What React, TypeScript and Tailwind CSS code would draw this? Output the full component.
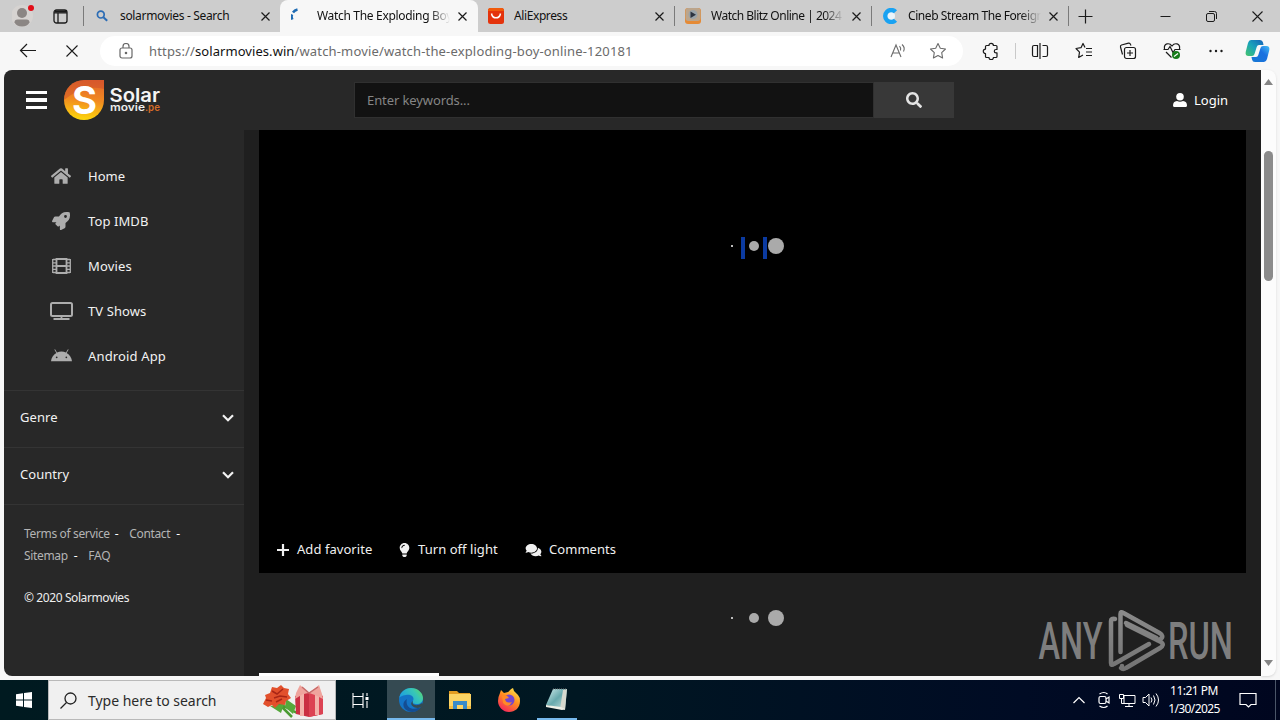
import React from "react";
import { FaHome, FaRocket, FaSearch, FaLightbulb, FaComments } from "react-icons/fa";
import { FaAndroid } from "react-icons/fa6";

const Sep = () => <div className="h-5 w-px shrink-0 bg-[#7a7a7a]" />;

const CloseGlyph = () => (
  <svg className="size-[11px] shrink-0" viewBox="0 0 11 11" fill="none" stroke="#1b1b1b" strokeWidth="1.2">
    <path d="M1.5 1.5 9.5 9.5M9.5 1.5 1.5 9.5" />
  </svg>
);

const SearchFav = () => (
  <svg className="size-4" viewBox="0 0 16 16" fill="none" stroke="#2b6cb5">
    <circle cx="6.8" cy="6.6" r="3.4" strokeWidth="1.7" />
    <path d="m9.4 9.2 3.8 3.6" strokeWidth="2" />
  </svg>
);

const SpinFav = () => (
  <svg className="size-4" viewBox="0 0 16 16" fill="none" stroke="#1d6bb3" strokeWidth="2.4">
    <path d="M1.500 11.500Q0 9 1.200 6.500" />
    <path d="M2 4.500Q3.500 2.200 6.500 1.500" />
  </svg>
);

const AliFav = () => (
  <svg className="size-4" viewBox="0 0 16 16">
    <rect width="16" height="16" rx="2.500" fill="#e4330c" />
    <path d="M0 3V2.500A2.500 2.500 0 0 1 2.500 0h11A2.500 2.500 0 0 1 16 2.500V3z" fill="#f05a0b" />
    <path d="M3.500 5.500C4.500 11.300 11.500 11.300 12.500 5.500" fill="none" stroke="#fff" strokeWidth="1.500" />
  </svg>
);

const BlitzFav = () => (
  <svg className="size-4" viewBox="0 0 16 16">
    <rect width="16" height="16" rx="3" fill="#e58a35" />
    <rect x="0.500" width="15" height="13" rx="3" fill="#bba58c" />
    <circle cx="8" cy="6.500" r="4.500" fill="#9aa3a8" />
    <path d="M5.500 3.500v6.500l5.500-3.200z" fill="#2d3440" />
  </svg>
);

const CinebFav = () => (
  <svg className="size-4" viewBox="0 0 16 16" fill="none">
    <circle cx="9" cy="8" r="4" fill="#eaf4fb" />
    <path d="M13.500 3.800A6 6 0 1 0 13.500 12.200" stroke="#19a2f2" strokeWidth="4.400" />
  </svg>
);

function Tab({ icon, title, active, width }: { icon: React.ReactNode; title: string; active?: boolean; width: string }) {
  return (
    <div className={`flex h-8 w-[196px] shrink-0 items-center ${active ? "-ml-px w-[198px] rounded-t-lg bg-[#f7f7f7] pl-[11px]" : "pl-[10px]"}`}>
      {icon}
      <div className={`ml-[10px] w-[133px] shrink-0 overflow-hidden whitespace-nowrap text-[12px] leading-4 text-[#111] ${width}`}>{title}</div>
      <div className="ml-[7px]"><CloseGlyph /></div>
    </div>
  );
}

const fade = "[mask-image:linear-gradient(to_right,#000_85%,transparent)]";

function TabBar() {
  return (
    <div className="flex h-8 shrink-0 items-center bg-[#cdcdcd]">
      <svg className="ml-3 h-6 w-6 shrink-0" viewBox="0 0 24 24">
        <circle cx="10" cy="12" r="11" fill="#d6d3d1" />
        <circle cx="10" cy="9" r="5" fill="#8b8684" />
        <path d="M2.500 18.500q0-3 3-3h9q3 0 3 3q-2 4-7.500 4t-7.500-4z" fill="#8b8684" />
        <circle cx="19" cy="4" r="3" fill="#e20d18" />
      </svg>
      <svg className="ml-[17px] h-[15px] w-[15px] shrink-0" viewBox="0 0 15 15" fill="none" stroke="#1b1b1b" strokeWidth="1.300">
        <rect x="1" y="1" width="13" height="13" rx="2.500" />
        <path d="M1 3.800h13M5 4v10" /><path d="M2 2.500h11" strokeWidth="2" />
      </svg>
      <div className="ml-[15px]"><Sep /></div>
      <Tab icon={<SearchFav />} title="solarmovies - Search" width="tracking-[-0.33px]" />
      <div className="w-px" />
      <Tab icon={<SpinFav />} title="Watch The Exploding Boy" active width={`tracking-[-0.32px] ${fade}`} />
      <Tab icon={<AliFav />} title="AliExpress" width="tracking-[-0.4px]" />
      <Sep />
      <Tab icon={<BlitzFav />} title="Watch Blitz Online | 2024" width={`tracking-[-0.5px] ${fade}`} />
      <Sep />
      <Tab icon={<CinebFav />} title="Cineb Stream The Foreign" width={`tracking-[-0.42px] ${fade}`} />
      <Sep />
      <svg className="ml-[9px] size-[15px] shrink-0" viewBox="0 0 15 15" stroke="#1b1b1b" strokeWidth="1.200"><path d="M7.500 0.500v14M.5 7.500h14" /></svg>
      <svg className="ml-[67px] h-3 w-[11px] shrink-0" viewBox="0 0 11 12" stroke="#1b1b1b"><path d="M0.500 6.500h10" /></svg>
      <svg className="ml-[35px] size-[11px] shrink-0" viewBox="0 0 11 11" fill="none" stroke="#1b1b1b"><rect x="0.500" y="2.500" width="8" height="8" rx="1.500" /><path d="M3 .5h5.500a2 2 0 0 1 2 2V8" /></svg>
      <svg className="ml-[35px] size-[11px] shrink-0" viewBox="0 0 11 11" stroke="#1b1b1b" strokeWidth="1.100"><path d="m.5.5 10 10m0-10-10 10" /></svg>
    </div>
  );
}

const tb = "size-[18px] shrink-0";

function Toolbar() {
  return (
    <div className="flex h-[38px] shrink-0 items-center bg-[#f7f7f7]">
      <svg className="ml-[19px] h-4 w-[17px] shrink-0" viewBox="0 0 17 16" fill="none" stroke="#1b1b1b" strokeWidth="1.200"><path d="M17 7.500H1.500M8 1 1.500 7.500 8 14" /></svg>
      <svg className="ml-[30px] size-3 shrink-0" viewBox="0 0 12 12" stroke="#1b1b1b" strokeWidth="1.100"><path d="m.5.5 11 11m0-11-11 11" /></svg>
      <div className="ml-[22px] flex h-[30px] w-[863px] shrink-0 items-center rounded-full bg-white">
        <svg className="ml-[19px] h-4 w-[14px] shrink-0" viewBox="0 0 14 16" fill="none" stroke="#686868" strokeWidth="1.200"><rect x="1" y="5" width="12" height="10" rx="2" /><path d="M4 5V3.500a3 3 0 0 1 6 0V5" /><circle cx="7" cy="10" r=".7" fill="#555" /></svg>
        <div className="ml-4 w-[740px] whitespace-nowrap text-[13px] leading-5 tracking-[0.16px] text-[#6b6b6b]">https://<span className="tracking-[0.06px] text-[#111]">solarmovies.win</span>/watch-movie/watch-the-exploding-boy-online-120181</div>
        <svg className="ml-[1px] h-4 w-[18px] shrink-0" viewBox="0 0 18 16" fill="none" stroke="#6b6b6b" strokeWidth="1.100"><path d="M1 14 6 2l5 12M2.800 10h6.500M9.500 3.200q1.800 1.800 1 4.300M12 1.500Q15.500 4.500 13.500 8.500" /></svg>
        <svg className="ml-[21px] size-[18px] shrink-0" viewBox="0 0 18 18" fill="none" stroke="#6b6b6b" strokeWidth="1.100" strokeLinejoin="round"><path d="m9 1.500 2.300 4.800 5.200.7-3.800 3.700.9 5.300L9 13.500 4.400 16l.9-5.300L1.500 7l5.200-.7z" /></svg>
      </div>
      <svg className={`ml-[19px] ${tb}`} viewBox="0 0 18 18" fill="none" stroke="#1b1b1b" strokeWidth="1.200" strokeLinejoin="round"><path d="M4.500 3.500H7a2.200 2.200 0 0 1 4.400 0H14q1 0 1 1V7.500h-1a1.700 1.700 0 0 0 0 3.400h1V14.500q0 1-1 1h-2.600a2.200 2.200 0 0 1-4.400 0H4.500q-1 0-1-1V11.500a2.200 2.200 0 0 1 0-4.400V4.500q0-1 1-1z" /></svg>
      <div className="ml-[15px] h-4 w-px bg-[#c9c9c9]" />
      <svg className={`ml-[15px] ${tb}`} viewBox="0 0 18 18" fill="none" stroke="#1b1b1b" strokeWidth="1.200"><path d="M6.500 3.500H3a1.500 1.500 0 0 0-1.500 1.500v8A1.500 1.500 0 0 0 3 14.500h3.500zM11.500 3.500H15A1.500 1.500 0 0 1 16.500 5v8a1.500 1.500 0 0 1-1.500 1.500h-3.500M9 1v16" /></svg>
      <svg className={`ml-[26px] ${tb}`} viewBox="0 0 18 18" fill="none" stroke="#1b1b1b" strokeWidth="1.200" strokeLinejoin="round"><path d="m10 5.500 -2-4-2 4.200L1 6.500l3.500 3.700-.8 5.300L8 13M11 6.500h6M11 10h6M11 13.500h6" /></svg>
      <svg className={`ml-[26px] ${tb}`} viewBox="0 0 18 18" fill="none" stroke="#1b1b1b" strokeWidth="1.200"><rect x="5.500" y="5.500" width="11" height="11" rx="2" /><path d="M11 8v6M8 11h6M3.500 12.500 1.500 5q-.4-1.500 1-2L9.500 1.200q1.500-.3 2 1.200l.5 1" /></svg>
      <svg className={`ml-[26px] ${tb}`} viewBox="0 0 18 18" fill="none" stroke="#1b1b1b" strokeWidth="1.200"><path d="M1.500 7C.5 1 6.500.5 9 4c2.500-3.500 8.500-3 7.500 3M.5 7.500H5l2-3 3 6 2-3h5.500M3 10l5.500 5.500" /><circle cx="13" cy="13" r="4" fill="#167c19" stroke="none" /><path d="m11 14.500 4-3" stroke="#fff" /></svg>
      <svg className={`ml-[26px] ${tb}`} viewBox="0 0 18 18" fill="#1b1b1b"><circle cx="3.500" cy="9" r="1.200" /><circle cx="9" cy="9" r="1.200" /><circle cx="14.500" cy="9" r="1.200" /></svg>
      <svg className="ml-[20px] h-6 w-[25px] shrink-0" viewBox="0 0 25 24">
        <defs>
          <linearGradient id="ca" x1="0" y1="1" x2="1" y2="0"><stop stopColor="#46c46b" /><stop offset=".5" stopColor="#18a3ba" /><stop offset="1" stopColor="#1660b8" /></linearGradient>
          <linearGradient id="cb" x1="0" y1="1" x2="1" y2="0"><stop stopColor="#1678d3" /><stop offset=".6" stopColor="#1b70e0" /><stop offset="1" stopColor="#45c0f5" /></linearGradient>
        </defs>
        <path d="M6 1h9q2.500 0 3 2.500L18.500 6H14q-1.800 0-2.300 2L9.500 15q-.5 2-2.500 2H3.500Q0 17 .7 13L3 4q.8-3 3-3z" fill="url(#ca)" />
        <path d="M19 23h-9q-2.500 0-3-2.500L6.500 18H11q1.800 0 2.300-2l2.200-7q.5-2 2.500-2h3.500Q25 7 24.300 11L22 20q-.8 3-3 3z" fill="url(#cb)" />
      </svg>
    </div>
  );
}

const SolarLogo = () => (
  <svg className="ml-[17px] h-10 w-[98px] shrink-0" viewBox="0 0 98 40">
    <defs><linearGradient id="sg" x1="0.600" y1="0" x2="0.500" y2="1"><stop stopColor="#e2652a" /><stop offset=".5" stopColor="#f18a20" /><stop offset="1" stopColor="#fdd70c" /></linearGradient></defs>
    <path d="M20 0h20v20A20 20 0 1 1 20 0z" fill="url(#sg)" />
    <path d="M0 20A20 20 0 0 1 20 0h20v9Q20 4 0 20z" fill="#c94a2d" opacity=".45" />
    <text x="8" y="34" fontFamily="Inter, sans-serif" fontWeight="700" fontSize="38" fill="#fff" textLength="25" lengthAdjust="spacingAndGlyphs">S</text>
    <text x="45.500" y="22" fontFamily="Inter, sans-serif" fontWeight="600" fontSize="18.500" fill="#f4f4f4" textLength="50.500" lengthAdjust="spacingAndGlyphs">Solar</text>
    <text x="46" y="31" fontFamily="Inter, sans-serif" fontWeight="600" fontSize="10.500" fill="#ececec" textLength="35" lengthAdjust="spacingAndGlyphs">movie</text>
    <text x="81" y="31" fontFamily="Inter, sans-serif" fontWeight="600" fontSize="10.500" fill="#d56b28" textLength="15" lengthAdjust="spacingAndGlyphs">.pe</text>
  </svg>
);

function SiteHeader() {
  return (
    <header className="flex h-[60px] shrink-0 items-center bg-[#282828] text-white">
      <div className="ml-[22px] flex w-[21px] flex-col gap-[4px]">
        <div className="h-[3px] bg-white" /><div className="h-[4px] bg-white" /><div className="h-[3px] bg-white" />
      </div>
      <SolarLogo />
      <div className="ml-[192px] flex h-9 w-[600px] shrink-0">
        <div className="flex w-[520px] items-center border border-[#303030] bg-[#121212] pt-[2px] pl-[12px] text-[13px] tracking-[-0.1px] text-[#858585]">Enter keywords...</div>
        <div className="flex w-20 items-center justify-center bg-[#383838] text-[#e4e4e4]"><FaSearch className="size-4" /></div>
      </div>
      <div className="ml-[219px] flex items-center gap-[7px] text-[13px]">
        <svg className="h-[14px] w-[14px]" viewBox="0 0 14 14" fill="#fff"><circle cx="7" cy="3.800" r="3.800" /><path d="M0 12.500Q0 8.300 4 8q3 1.500 6 0 4 .3 4 4.500 0 1.500-1.500 1.500h-11Q0 14 0 12.500z" /></svg>
        <span className="pt-[2px]">Login</span>
      </div>
    </header>
  );
}

const FilmIcon = () => (
  <svg className="h-4 w-[19px]" viewBox="0 0 19 16" fill="none" stroke="currentColor">
    <path d="M4.500 1h10v14h-10zM4.500 8h10" strokeWidth="1.800" />
    <path d="M.7 1v14M18.300 1v14M1 1.500h3M1 4.800h3M1 8h3M1 11.300h3M1 14.500h3M15 1.500h3M15 4.800h3M15 8h3M15 11.300h3M15 14.500h3" strokeWidth="1.300" />
  </svg>
);

const TvIcon = () => (
  <svg className="h-[18px] w-[23px]" viewBox="0 0 23 18" fill="none" stroke="currentColor">
    <rect x="1" y="1" width="21" height="13" rx="1.500" strokeWidth="2" />
    <path d="M3.500 17h16M11.500 14v3" strokeWidth="1.800" />
  </svg>
);

const nav = [
  { label: "Home", icon: <FaHome className="size-5" />, t: "tracking-[0px]" },
  { label: "Top IMDB", icon: <FaRocket className="size-[18px]" />, t: "tracking-[0.1px]" },
  { label: "Movies", icon: <FilmIcon />, t: "tracking-[0.15px]" },
  { label: "TV Shows", icon: <TvIcon />, t: "tracking-[0.1px]" },
  { label: "Android App", icon: <FaAndroid className="size-[21px]" />, t: "tracking-[0.15px]" },
];

const Chevron = () => (
  <svg className="h-2 w-3" viewBox="0 0 12 8" fill="none" stroke="#f2f2f2" strokeWidth="2.200"><path d="m1 1.200 5 5 5-5" /></svg>
);

function Sidebar() {
  return (
    <aside className="flex w-60 shrink-0 flex-col bg-[#282828] text-[13px] text-[#f2f2f2]">
      <nav className="flex h-[260px] flex-col pt-6">
        {nav.map((n) => (
          <div key={n.label} className="flex h-[45px] items-center pl-[45px]">
            <div className="flex w-6 shrink-0 justify-center pb-px text-[#adadad]">{n.icon}</div>
            <span className={`ml-[15px] ${n.t}`}>{n.label}</span>
          </div>
        ))}
      </nav>
      {["Genre", "Country"].map((s) => (
        <div key={s} className="flex h-[57px] items-center justify-between border-t border-[#343434] pr-[10px] pb-[2px] pl-4">
          <span className="tracking-[0.05px]">{s}</span><Chevron />
        </div>
      ))}
      <div className="border-t border-[#343434] pt-[18px] pl-5 text-[12px] leading-[22px] tracking-[-0.35px] text-[#b4b4b4]">
        <div className="flex"><span>Terms of service</span><span className="ml-[5px] text-white">-</span><span className="ml-[11px]">Contact</span><span className="ml-[6px] text-white">-</span></div>
        <div className="flex"><span>Sitemap</span><span className="ml-[6px] text-white">-</span><span className="ml-[11px] tracking-[-0.2px]">FAQ</span></div>
        <div className="mt-5 tracking-[-0.4px] text-[#eee]">© 2020 Solarmovies</div>
      </div>
    </aside>
  );
}

function Loading({ bars }: { bars?: boolean }) {
  return (
    <div className="flex h-[22px] items-center">
      <div className="size-[2px] bg-[#bbb]" />
      <div className={`ml-[8px] h-[22px] w-1 self-start ${bars ? "translate-y-[2px] bg-[#0b3aa0]" : ""}`} />
      <div className="ml-1 size-[10px] rounded-full bg-[#aaa]" />
      <div className={`ml-1 h-[22px] w-1 self-start ${bars ? "translate-y-[2px] bg-[#0b3aa0]" : ""}`} />
      <div className="ml-px size-4 rounded-full bg-[#aaa]" />
    </div>
  );
}

function Main() {
  return (
    <main className="flex w-[1017px] flex-col bg-[#1f1f1f] pl-[15px]">
      <section className="flex h-[443px] w-[987px] shrink-0 flex-col bg-black pt-[105px] text-[#f0f0f0]">
        <div className="pl-[472px]"><Loading bars /></div>
        <div className="mt-auto mb-[13px] flex h-5 items-center pl-[18px] text-[13px]">
          <svg className="size-3" viewBox="0 0 12 12" stroke="#f0f0f0" strokeWidth="2.200"><path d="M6 0v12M0 6h12" /></svg>
          <span className="ml-2 w-[76px] whitespace-nowrap tracking-[0.05px]">Add favorite</span>
          <FaLightbulb className="ml-[23px] h-[14px] w-[17px]" /><span className="ml-[5px] w-[80px] whitespace-nowrap tracking-[0.05px]">Turn off light</span>
          <FaComments className="ml-[27px] h-[14px] w-[17px]" /><span className="ml-[7px] tracking-[0.05px]">Comments</span>
        </div>
      </section>
      <div className="mt-[34px] pl-[472px]"><Loading /></div>
      <div className="mt-auto h-[3px] w-[180px] shrink-0 bg-white" />
    </main>
  );
}

const Watermark = () => (
  <svg className="absolute top-[538px] left-[1034px] h-[66px] w-[200px]" viewBox="0 0 200 66">
    <defs><linearGradient id="wm" x1="0" y1="0" x2="0" y2="1"><stop stopColor="#8a8a8a" /><stop offset="1" stopColor="#747474" /></linearGradient></defs>
    <text x="0.500" y="51" fontFamily="Roboto, sans-serif" fontWeight="500" fontSize="51" fill="#7e7e7e" textLength="64" lengthAdjust="spacingAndGlyphs">ANY</text>
    <text x="130" y="51" fontFamily="Roboto, sans-serif" fontWeight="500" fontSize="51" fill="#7e7e7e" textLength="65" lengthAdjust="spacingAndGlyphs">RUN</text>
    <g fill="none" stroke="url(#wm)" strokeWidth="4.500" strokeLinejoin="round" strokeLinecap="round">
      <path d="M77 11q-4-1-4 2v42q0 3 3 1l35-20M82.500 44V6q0-3 3-1l36 20q5 3 1 6t-4-1L88 15M83 60q2 2 5 0l34-20q5-3 1-6L89 17M84 58l0 0" />
    </g>
  </svg>
);

function Taskbar() {
  return (
    <footer className="flex h-10 shrink-0 bg-[linear-gradient(to_right,#001a20,#001722_45%,#000b24_80%,#00061f)] text-white">
      <div className="flex w-12 items-center justify-center">
        <svg className="size-4" viewBox="0 0 16 16" fill="#fff"><path d="M0 2.300 7 1.200v6.300H0zM8 1l8-1v7.500H8zM0 8.500h7v6.300l-7-1zM8 8.500h8V16l-8-1z" /></svg>
      </div>
      <div className="flex w-72 items-center border border-[#b9b9b9] bg-[#f0f0f0] text-[#2b2b2b]">
        <svg className="ml-[11px] size-[17px]" viewBox="0 0 17 17" fill="none" stroke="#222" strokeWidth="1.300"><circle cx="10.500" cy="6.500" r="5.500" /><path d="m6.500 10.500-6 6" /></svg>
        <span className="ml-[11px] w-[169px] whitespace-nowrap text-[14px] tracking-[-0.02px]">Type here to search</span>
        <svg className="ml-[5px] h-9 w-[64px]" viewBox="0 0 64 36">
          <path d="M18 22 35 31M15 20q8 8 15 15" stroke="#4a9b32" strokeWidth="2.500" fill="none" />
          <path d="m24 17 10 7-3 8-8-7zM8 24l14-2-3 9z" fill="#55a83b" />
          <path d="m1 22 3-6-1-3 5-2 2-6 5 1 4-3 3 3 5 1-1 5 3 4-5 3-1 4-6-1-4 4-3-3-4 2z" fill="#e2502c" />
          <path d="m4 18 6 1m0-10 5 3 6-5m-9 9 6-2 7 1m-11 5 6-3" stroke="#a92616" strokeWidth="1.500" fill="none" />
          <path d="m33 14 14-4 14 4v18l-14 3-13-3z" fill="#ca2f42" />
          <path d="M47 11v24l14-3V14z" fill="#dc4353" />
          <path d="M38 12h4v22h-4zM53 12h4v21h-4z" fill="#f3b2aa" />
          <path d="M47 11 38 3l-4 8-1 6 8-5zM47 11l10-8 3 9 1 5-8-4z" fill="#efa49d" />
          <path d="m40 5 7 6 9-6" fill="none" stroke="#c66a69" strokeWidth="1.500" />
        </svg>
      </div>
      <div className="flex w-[49px] items-center justify-center">
        <svg className="h-[17px] w-[17px]" viewBox="0 0 17 17" fill="none" stroke="#fff" strokeWidth="1.100"><path d="M1 4.500h10v8H1zM1 4.500V1M11 4.500V1M1 16v-3.500M11 16v-3.500M15 1v3m0 5v7" /><path d="M13.500 5h3v3h-3z" fill="#fff" stroke="none" /></svg>
      </div>
      <div className="ml-[2px] flex w-12 items-center justify-center border-b-2 border-[#76b9ed] bg-[#354a52] pt-[2px]">
        <svg className="size-6" viewBox="0 0 24 24">
          <defs><linearGradient id="ed" x1="0" y1="0.500" x2="1" y2="0"><stop stopColor="#1b9de2" /><stop offset=".6" stopColor="#37c6b7" /><stop offset="1" stopColor="#67dc56" /></linearGradient></defs>
          <circle cx="12" cy="12" r="12" fill="#1474c6" />
          <path d="M0 11C1 4 6 0 12 0c7 0 12 5 12 10 0 4-3 6-6 6-4 0-5-1-4-3 2-4-2-7-7-6-4 .5-7 2-7 4z" fill="url(#ed)" />
          <path d="M8 11c-2 6 3 12 11 9l3-1c-3 5-9 6-13 4-6-3-6-9-1-12z" fill="#144d92" />
          <path d="M14 13c-2 4 4 6 9 2l1 2q-2 3-5 3c-6 0-9-5-5-7z" fill="#354a52" />
        </svg>
      </div>
      <div className="flex w-[50px] items-center justify-center">
        <svg className="h-5 w-[22px]" viewBox="0 0 22 20"><path d="M0 1h8l2 2h11v5H0z" fill="#e39d21" /><path d="M0 4h22v15H0z" fill="#fcd464" /><path d="M4 19v-8h14v8h-4v-4H8v4z" fill="#388ccb" /><path d="M0 16h4v3H0zm18 0h4v3h-4z" fill="#f3bd42" /></svg>
      </div>
      <div className="flex w-12 items-center justify-center">
        <svg className="size-6" viewBox="0 0 24 24"><defs><linearGradient id="ff" x1=".8" y1="0" x2=".2" y2="1"><stop stopColor="#ffe34a" /><stop offset=".45" stopColor="#ff8d20" /><stop offset="1" stopColor="#f51f60" /></linearGradient></defs><path d="M3 5l1-3 3 3 4-1c2-1 2-3 5-4l1 3 4 4q2 2 2 6c0 7-5 11-11 11S1 19 1 13q0-4 2-8z" fill="url(#ff)" /><circle cx="12" cy="12" r="5.500" fill="#7446cf" /><path d="M5 8q4-3 7 2l-4 1q1 5 7 3-4 7-9 1z" fill="#ff8a26" /></svg>
      </div>
      <div className="flex w-12 items-center justify-center">
        <div className="flex h-10 w-10 items-center justify-center border-b-2 border-[#76b9ed]">
          <svg className="h-6 w-6" viewBox="0 0 24 24"><defs><linearGradient id="np" x1="0" y1="0" x2="1" y2="1"><stop stopColor="#d4eeee" /><stop offset=".5" stopColor="#67a9ad" /><stop offset="1" stopColor="#c8e1df" /></linearGradient></defs><path d="M8 2h14l-2 20L1 18z" fill="url(#np)" /><path d="m18 3 4-1-2 21-5-1z" fill="#d7d9cf" /><path d="m1 18 15 2 4 2-3 1-16-3z" fill="#eef0e7" /><path d="M8 2h14" stroke="#777" strokeDasharray="1 1" /></svg>
        </div>
      </div>
      <div className="ml-auto flex w-[207px] items-center">
        <svg className="h-2 w-3" viewBox="0 0 12 8" fill="none" stroke="#fff" strokeWidth="1.200"><path d="m.5 7 5.500-5.500L11.500 7" /></svg>
        <svg className="ml-[13px] h-[18px] w-3" viewBox="0 0 12 18" fill="none" stroke="#fff" strokeWidth="1.200"><rect x="1" y="5.500" width="7" height="7" rx="1.500" /><path d="m8 8 3-2v6L8 10M1.500 3Q6 0 9.500 3M1.500 15Q6 18 9.500 15" /></svg>
        <svg className="ml-[9px] h-4 w-[17px]" viewBox="0 0 17 16" fill="none" stroke="#fff"><path d="M5 3.500h11v8H5zM10 11.500v3M6 14.500h8M.5 2.500h4v4h-4zM2.500 6.500v5H5" /></svg>
        <svg className="ml-[6px] h-4 w-[18px]" viewBox="0 0 18 16" fill="none" stroke="#fff"><path d="M1 5.500h2.500L7 2v12l-3.500-3.500H1zM9 5.500q2 2.500 0 5M11.500 3.500q3 4.500 0 9M14 1.500q5 6.500 0 13" /></svg>
        <div className="ml-[5px] flex w-[58px] flex-col items-center whitespace-nowrap text-[12px] leading-[18px] tracking-[-0.5px]"><span>11:21 PM</span><span className="tracking-[-0.6px]">1/30/2025</span></div>
        <svg className="ml-[16px] h-4 w-[18px]" viewBox="0 0 18 16" fill="none" stroke="#fff" strokeWidth="1.200"><path d="M1 1.500h16v11h-5L9.500 15 7 12.500H1z" /></svg>
        <div className="mr-1 ml-auto h-10 w-px bg-[#4a5568]" />
      </div>
    </footer>
  );
}

export default function App() {
  return (
    <div className="flex h-[720px] w-[1280px] flex-col overflow-hidden bg-[#f7f7f7] font-['Noto_Sans',sans-serif]">
      <TabBar />
      <Toolbar />
      <div className="mb-1 flex h-[606px] shrink-0 pl-1">
        <div className="relative flex w-[1257px] shrink-0 flex-col overflow-hidden rounded-l-lg">
          <SiteHeader />
          <div className="flex min-h-0 flex-1"><Sidebar /><Main /></div>
          <Watermark />
        </div>
        <div className="flex w-[15px] flex-col items-center rounded-r-lg bg-[#fcfcfc] shadow-sm">
          <svg className="mt-[9px] h-[6px] w-[9px]" viewBox="0 0 9 6" fill="#858585"><path d="M0 6 4.500 0 9 6z" /></svg>
          <div className="mt-[66px] h-[130px] w-[9px] rounded-full bg-[#8b8b8b]" />
          <svg className="mt-auto mb-[10px] h-[6px] w-[9px]" viewBox="0 0 9 6" fill="#858585"><path d="M0 0h9L4.500 6z" /></svg>
        </div>
      </div>
      <Taskbar />
    </div>
  );
}
